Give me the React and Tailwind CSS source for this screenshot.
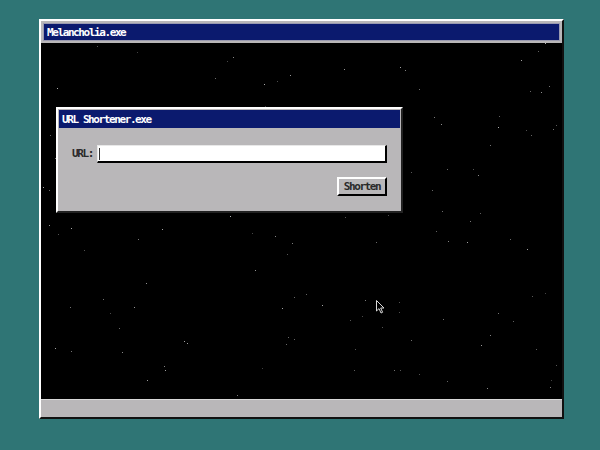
import { useMemo } from 'react';

// pseudo-random star field, seeded so every render draws the same sky
function makeStars(count, seed) {
    let s = seed;
    const rnd = () => {
        s = (s * 1664525 + 1013904223) % 4294967296;
        return s / 4294967296;
    };
    const out = [];
    for (let i = 0; i < count; i++) {
        out.push({
            x: Math.floor(rnd() * 518),
            y: Math.floor(rnd() * 354),
            a: 0.25 + rnd() * 0.45,
        });
    }
    return out;
}

const MONO = "font-['DejaVu_Sans_Mono','Liberation_Mono',monospace]";

function Cursor() {
    return (
        <svg width="10" height="15" viewBox="0 0 10 15" className="absolute left-[335px] top-[257px]">
            <path d="M0.5 0.5 L0.5 11 L3 8.6 L5 13 L6.6 12.3 L4.7 8 L8 8 Z" fill="#000" stroke="#d8d8d8" strokeWidth="1" />
        </svg>
    );
}

function UrlShortener() {
    return (
        <div className="absolute left-[15px] top-[64px] w-[347px] h-[106px] border-2 border-t-white border-l-white border-r-[#222] border-b-[#222] bg-[#b9b7b9] p-px flex flex-col">
            <div className={`h-[18px] bg-[#0b1a6e] text-white text-[11px] tracking-[-1.4px] font-bold leading-[19px] px-[3px] ${MONO}`}>
                URL Shortener.exe
            </div>
            <div className="flex-1 pt-[17px] pl-[13px] pr-[13px] flex flex-col">
                <div className="flex items-center gap-[4px]">
                    <span className={`text-[11px] tracking-[-1.4px] font-bold text-[#2a2a2a] ${MONO}`}>URL:</span>
                    <div className="relative h-[18px] flex-1 bg-white border-t border-l border-t-[#e8e8e8] border-l-[#e8e8e8] border-r-2 border-b-2 border-r-black border-b-black">
                        <span className="absolute left-[1px] top-[2px] w-px h-[12px] bg-[#333]" />
                    </div>
                </div>
                <div className="flex justify-end mt-[14px]">
                    <button className={`w-[50px] h-[19px] bg-[#b9b7b9] border-2 border-t-white border-l-white border-r-black border-b-black text-[11px] tracking-[-1.4px] font-bold text-[#2a2a2a] leading-none ${MONO}`}>
                        Shorten
                    </button>
                </div>
            </div>
        </div>
    );
}

export default function App() {
    const stars = useMemo(() => makeStars(130, 7), []);

    return (
        <div className="w-[600px] h-[450px] bg-[#2f7575] pt-[19px] pl-[39px]">
            <div className="w-[525px] h-[400px] border-2 border-t-white border-l-white border-r-[#111] border-b-[#111] bg-[#b9b7b9] flex flex-col">
                {/* barra de título */}
                <div className="h-[22px] p-[2px] bg-[#b9b7b9]">
                    <div className={`h-full bg-[#0b1a6e] border border-[#9a9ab0] text-white text-[11px] tracking-[-1.4px] font-bold leading-[18px] px-[3px] ${MONO}`}>
                        Melancholia.exe
                    </div>
                </div>

                {/* escritorio negro con estrellas */}
                <div className="relative h-[356px] bg-black overflow-hidden">
                    {stars.map((st, i) => (
                        <span key={i} className="absolute w-px h-px bg-white"
                            style={{ left: st.x, top: st.y, opacity: st.a }} />
                    ))}
                    <UrlShortener />
                    <Cursor />
                </div>

                {/* barra de estado */}
                <div className="h-[18px] bg-[#b9b7b9] border-t border-t-[#d8d8d8]" />
            </div>
        </div>
    );
}
